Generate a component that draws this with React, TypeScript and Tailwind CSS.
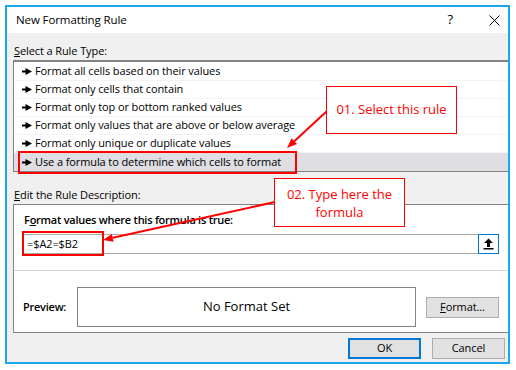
import React from "react";

const rules = [
  "Format all cells based on their values",
  "Format only cells that contain",
  "Format only top or bottom ranked values",
  "Format only values that are above or below average",
  "Format only unique or duplicate values",
  "Use a formula to determine which cells to format",
];

function Bullet() {
  return (
    <svg width="10" height="7" viewBox="0 0 10 7" className="shrink-0">
      <path d="M0 2.5h3.5V0L10 3.5 3.5 7V4.5H0z" fill="#000" />
    </svg>
  );
}

function CollapseIcon() {
  return (
    <svg width="11" height="12" viewBox="0 0 11 12">
      <path d="M5.5 0.5L10 5H7v4H4V5H1z" fill="#000" />
      <rect x="0.5" y="10" width="10" height="1.5" fill="#000" />
    </svg>
  );
}

export default function App() {
  return (
    <div className="relative w-[516px] h-[370px] bg-white pl-[5px] pt-[5px] font-['Open_Sans',sans-serif] text-[11px] tracking-[-0.1px] text-black overflow-hidden">
      <div className="w-[505px] h-[359px] border-2 border-[#1aa7ec] flex flex-col overflow-hidden">
        {/* title bar */}
        <div className="h-[26px] shrink-0 bg-white flex items-center pl-[9px]">
          <span className="text-[11.5px]">New Formatting Rule</span>
          <span className="ml-auto text-[13px] mr-[36px]">?</span>
          <svg width="11" height="11" viewBox="0 0 11 11" className="mr-[8px]">
            <path d="M0.5 0.5L10.5 10.5M10.5 0.5L0.5 10.5" stroke="#000" strokeWidth="1" />
          </svg>
        </div>

        <div className="flex-1 bg-[#f0f0f0] pt-[10px] flex flex-col">
          <div className="h-[16px] leading-[16px] pl-[7px]">
            <span className="underline">S</span>elect a Rule Type:
          </div>
          <div className="mt-px ml-[6px] border-t-2 border-l border-b border-[#838383] bg-white pt-px">
            {rules.map((r, i) => (
              <div
                key={r}
                className={`h-[18px] flex items-center gap-[3px] pl-[8px] ${
                  i === rules.length - 1 ? "bg-[#dedee3]" : "border-b border-[#f3f3f3]"
                }`}
              >
                <Bullet />
                <span>{r}</span>
              </div>
            ))}
          </div>

          <div className="mt-[15px] h-[16px] leading-[16px] pl-[7px]">
            <span className="underline">E</span>dit the Rule Description:
          </div>
          <div className="mt-px ml-[6px] border-t border-l border-b border-[#838383] bg-white pt-[7px] pb-[5px]">
            <div className="h-[16px] leading-[16px] pl-[10px] font-semibold tracking-[-0.25px]">
              F<span className="underline">o</span>rmat values where this formula is true:
            </div>
            <div className="mt-[6px] ml-[9px] w-[476px] h-[20px] border border-[#a9a9a9] flex items-center pl-[3px]">
              <span>=$A2=$B2</span>
              <div className="ml-auto -mr-px h-[20px] w-[21px] border border-[#0078d7] bg-white flex items-center justify-center">
                <CollapseIcon />
              </div>
            </div>
            <div className="mt-[16px] h-px bg-[#d5d5d5]" />
            <div className="mt-[16px] h-[40px] flex items-center pl-[9px]">
              <span className="w-[54px] font-semibold tracking-[-0.25px]">Preview:</span>
              <div className="w-[339px] h-[40px] border border-[#838383] flex items-center justify-center text-[13px] tracking-normal">
                No Format Set
              </div>
              <div className="ml-[10px] w-[73px] h-[21px] bg-[#e1e1e1] border border-[#adadad] flex items-center justify-center">
                <span>
                  <span className="underline">F</span>ormat...
                </span>
              </div>
            </div>
          </div>

          <div className="mt-[5px] flex justify-end gap-[11px] pr-[3px]">
            <div className="w-[73px] h-[21px] bg-[#e1e1e1] border-2 border-[#0078d7] flex items-center justify-center">
              OK
            </div>
            <div className="w-[73px] h-[21px] bg-[#e1e1e1] border border-[#adadad] flex items-center justify-center">
              Cancel
            </div>
          </div>
        </div>
      </div>

      {/* annotations */}
      <div className="absolute left-[18px] top-[151px] w-[279px] h-[23px] border-2 border-[#ff0000]" />
      <div className="absolute left-[22px] top-[231px] w-[82px] h-[25px] border-2 border-[#ff0000]" />

      <svg className="absolute left-0 top-0 pointer-events-none" width="516" height="370">
        <line x1="327" y1="111" x2="294.3" y2="141.2" stroke="#ff0000" strokeWidth="2" />
        <polygon points="287,148 297,144.1 291.6,138.3" fill="#ff0000" />
        <line x1="275" y1="202" x2="112.8" y2="237.8" stroke="#ff0000" strokeWidth="2" />
        <polygon points="103,240 113.6,241.7 111.9,233.9" fill="#ff0000" />
      </svg>

      <div className="absolute left-[326px] top-[86px] w-[131px] h-[48px] border border-[#ff0000] bg-white flex items-center justify-center text-[13px] tracking-normal text-[#ff0000]">
        01. Select this rule
      </div>
      <div className="absolute left-[274px] top-[178px] w-[131px] h-[49px] border border-[#ff0000] bg-white flex items-center justify-center text-center text-[13px] leading-[18px] tracking-normal text-[#ff0000]">
        02. Type here the
        <br />
        formula
      </div>
    </div>
  );
}
